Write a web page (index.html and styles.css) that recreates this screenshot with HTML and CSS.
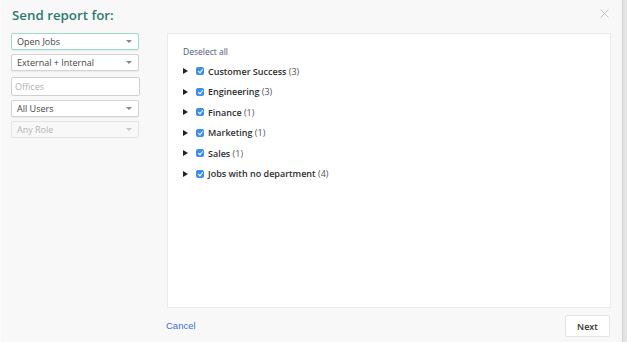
FILE: index.html
```html
<!DOCTYPE html>
<html lang="en">
<head>
    <meta charset="UTF-8">
    <meta name="viewport" content="width=device-width, initial-scale=1.0">
    <title>Send report</title>
    <link rel="stylesheet" href="styles.css">
</head>
<body>
    <div class="modal">
        <div class="modal-head">
            <h1>Send report for:</h1>
            <svg class="close" width="9" height="9" viewBox="0 0 9 9"><path d="M0.5 0.5 L8.5 8.5 M8.5 0.5 L0.5 8.5" stroke="#c2c2c2" stroke-width="1" fill="none"/></svg>
        </div>
        <div class="modal-body">
            <div class="filters">
                <div class="select focused">Open Jobs <span class="caret"></span></div>
                <div class="select">External + Internal <span class="caret"></span></div>
                <div class="input">Offices</div>
                <div class="select">All Users <span class="caret"></span></div>
                <div class="select disabled">Any Role <span class="caret"></span></div>
            </div>
            <div class="panel">
                <a class="deselect">Deselect all</a>
                <ul class="tree">
                    <li><span class="arrow"></span><span class="check"></span><b>Customer Success</b>&nbsp;<span class="count">(3)</span></li>
                    <li><span class="arrow"></span><span class="check"></span><b>Engineering</b>&nbsp;<span class="count">(3)</span></li>
                    <li><span class="arrow"></span><span class="check"></span><b>Finance</b>&nbsp;<span class="count">(1)</span></li>
                    <li><span class="arrow"></span><span class="check"></span><b>Marketing</b>&nbsp;<span class="count">(1)</span></li>
                    <li><span class="arrow"></span><span class="check"></span><b>Sales</b>&nbsp;<span class="count">(1)</span></li>
                    <li><span class="arrow"></span><span class="check"></span><b>Jobs with no department</b>&nbsp;<span class="count">(4)</span></li>
                </ul>
            </div>
        </div>
        <div class="modal-foot">
            <a class="cancel">Cancel</a>
            <button class="next">Next</button>
        </div>
    </div>
    <div class="scrollbar"></div>
</body>
</html>
```

FILE: styles.css
```css
body {
    margin: 0;
    height: 342px;
    display: flex;
    font-family: "Open Sans", sans-serif;
    background-color: #f8f8f8;
    color: #333;
    overflow: hidden;
}
.modal {
    flex: 1;
    display: flex;
    flex-direction: column;
    background-color: #f8f8f8;
    border-left: 1px solid #fdfdfd;
}
.scrollbar {
    width: 4px;
    background-color: #e4e4e4;
    border-left: 1px solid #d6d6d6;
}
.modal-head {
    display: flex;
    justify-content: space-between;
    align-items: flex-start;
    padding: 5px 13px 0 11px;
    height: 28px;
    box-sizing: border-box;
}
h1 {
    margin: 0;
    font-size: 13.3px;
    font-weight: 600;
    color: #2b7c70;
    line-height: 20px;
}
.close {
    margin-top: 4px;
}
.modal-body {
    display: flex;
    height: 279px;
    padding-top: 5px;
}
.filters {
    width: 128px;
    margin-left: 10px;
    display: flex;
    flex-direction: column;
    flex-shrink: 0;
}
.select, .input {
    box-sizing: border-box;
    height: 17px;
    margin-bottom: 4px;
    padding: 0 5px;
    font-size: 9px;
    line-height: 15px;
    color: #444;
    background-color: #fff;
    border: 1px solid #d4d4d4;
    border-radius: 2px;
    box-shadow: 0 1px 1px rgba(0, 0, 0, 0.06);
    position: relative;
}
.select.focused {
    border-color: #9fd8cf;
}
.select.disabled {
    color: #b4b4b4;
    background-color: #f8f8f8;
    border-color: #e4e4e4;
    box-shadow: none;
}
.input {
    height: 19px;
    line-height: 17px;
    padding-left: 3px;
    margin-right: -1px;
    color: #b0b0b0;
    border-color: #cfcfcf;
    box-shadow: none;
    margin-top: 2px;
    margin-bottom: 4px;
}
.caret {
    position: absolute;
    right: 6px;
    top: 6px;
    border-left: 3px solid transparent;
    border-right: 3px solid transparent;
    border-top: 3px solid #888;
}
.disabled .caret {
    border-top-color: #c8c8c8;
}
.panel {
    margin-left: 28px;
    width: 444px;
    height: 275px;
    background-color: #fff;
    border: 1px solid #ebebeb;
    padding: 12px 0 0 15px;
    box-sizing: border-box;
}
.deselect {
    display: block;
    font-size: 8.5px;
    color: #46577a;
    line-height: 12px;
    margin-bottom: 3px;
}
.tree {
    list-style: none;
    margin: 0;
    padding: 0;
}
.tree li {
    display: flex;
    align-items: center;
    height: 20.5px;
    font-size: 9px;
}
.tree b {
    font-weight: 600;
    color: #2e2e2e;
}
.count {
    color: #555;
}
.arrow {
    width: 0;
    height: 0;
    border-top: 3px solid transparent;
    border-bottom: 3px solid transparent;
    border-left: 5px solid #222;
    margin: 0 8px 0 0;
}
.check {
    width: 8px;
    height: 8px;
    border-radius: 2px;
    background-color: #3d8ee8;
    margin-right: 4px;
    position: relative;
}
.check::after {
    content: "";
    position: absolute;
    left: 2.5px;
    top: 1px;
    width: 2px;
    height: 4px;
    border-right: 1px solid #fff;
    border-bottom: 1px solid #fff;
    transform: rotate(40deg);
}
.modal-foot {
    display: flex;
    justify-content: space-between;
    align-items: center;
    padding: 3px 12px 0 165px;
}
.cancel {
    font-family: "Liberation Sans", Arial, sans-serif;
    font-size: 9.5px;
    color: #3c6fd6;
    margin-top: -1px;
}
.next {
    width: 45px;
    height: 22px;
    font-family: "Open Sans", sans-serif;
    font-size: 9px;
    font-weight: 600;
    color: #333;
    background-color: #fff;
    border: 1px solid #e4e4e4;
    border-radius: 2px;
    padding: 0;
}
```
